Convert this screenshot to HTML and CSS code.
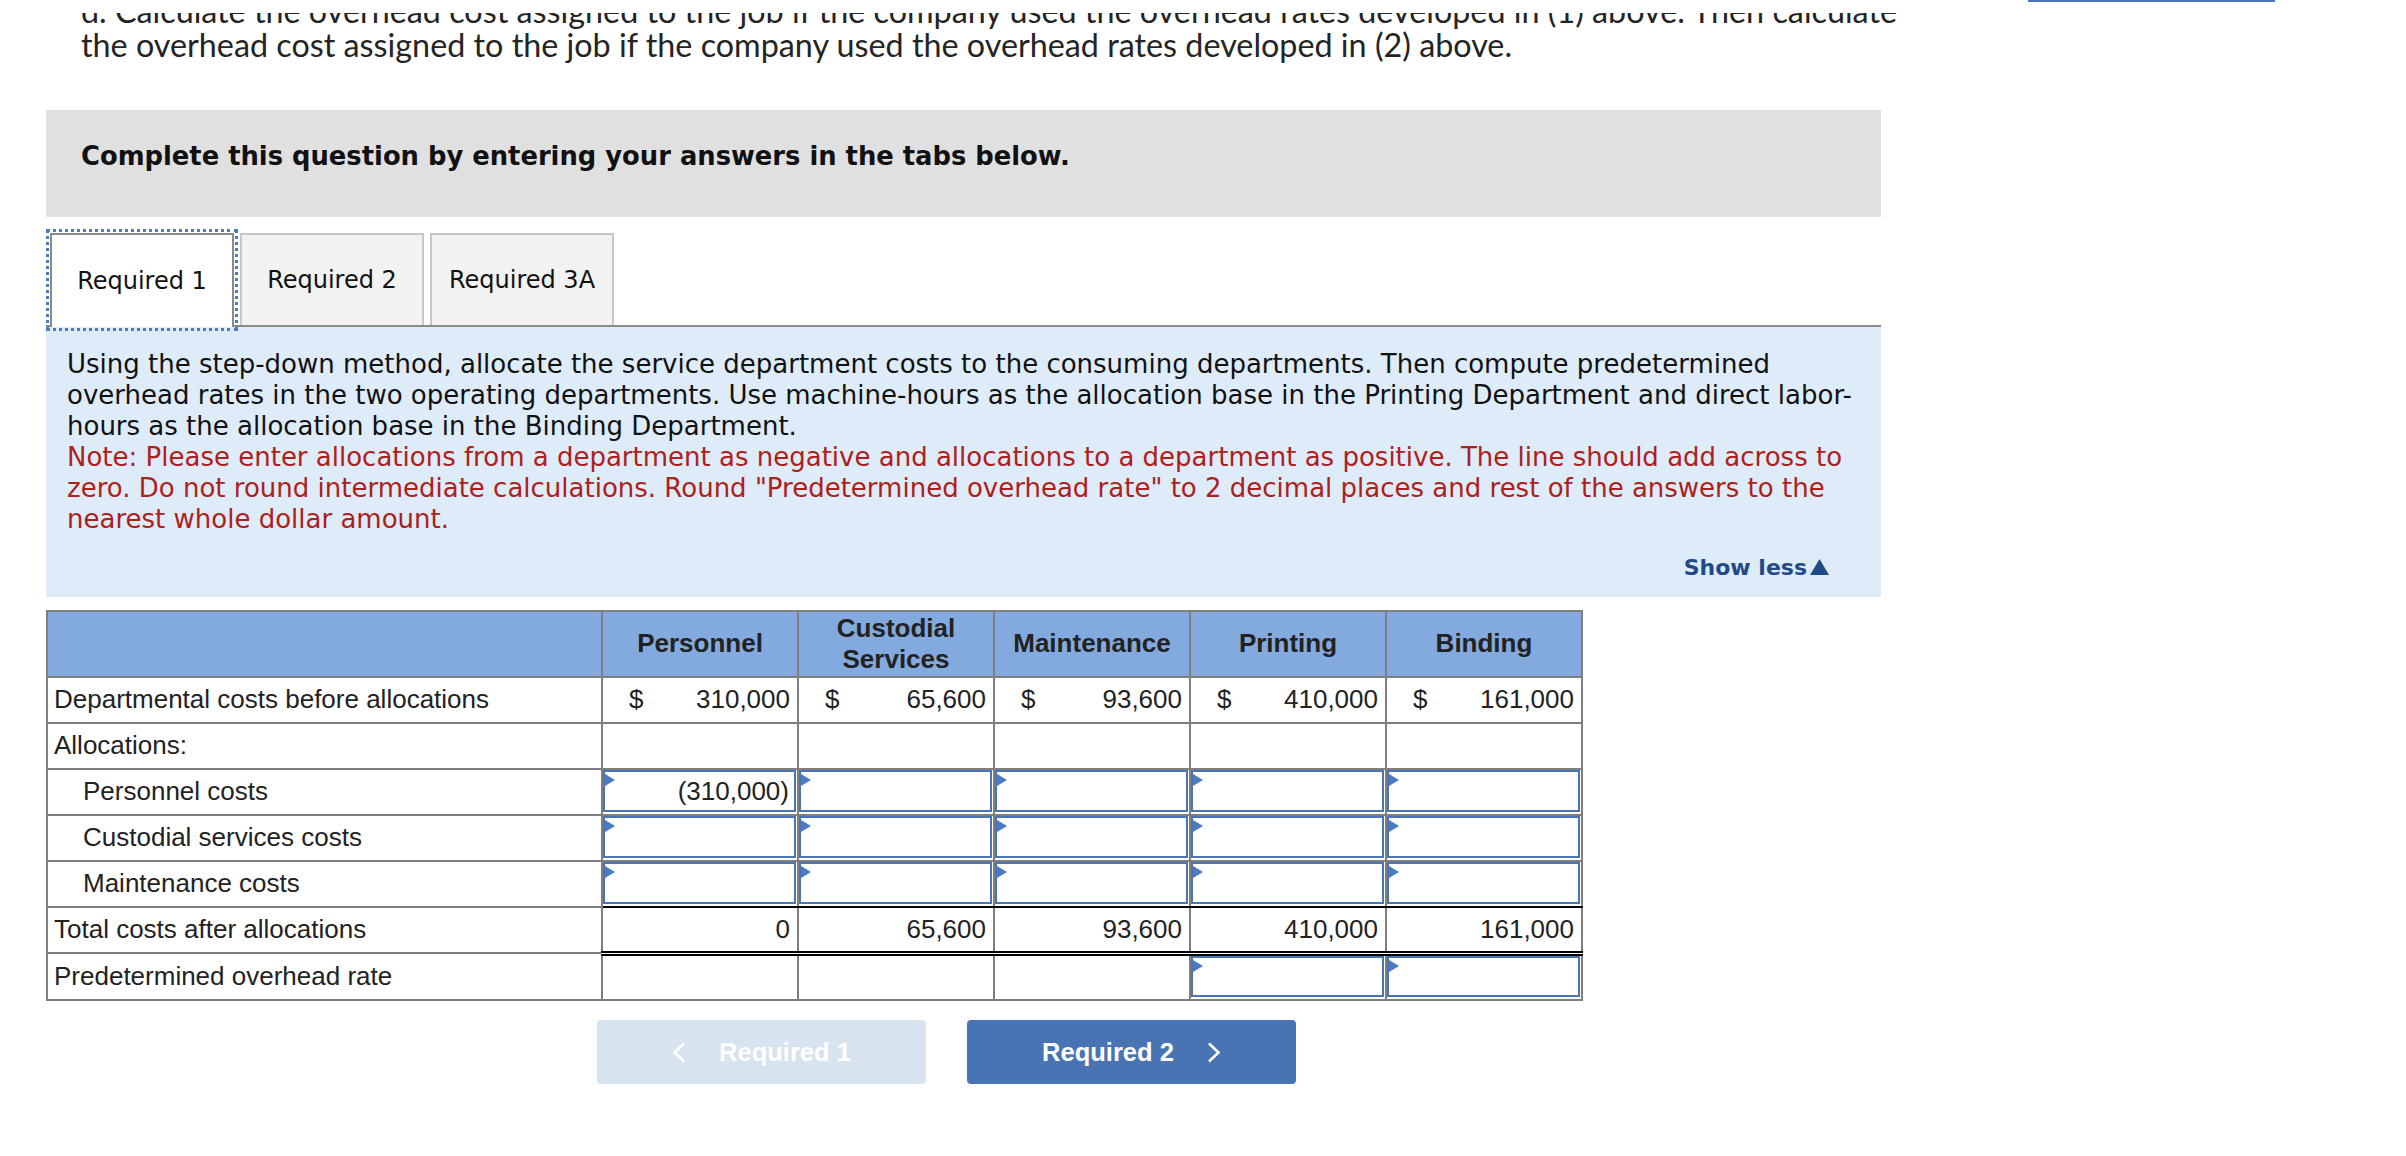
FILE: index.html
```html
<!DOCTYPE html>
<html lang="en">
<head>
<meta charset="utf-8">
<title>Step-down allocation</title>
<link rel="stylesheet" href="styles.css">
</head>
<body>
<div class="topbar"><div class="topbar-btn"></div></div>
<div class="page">
  <div class="main">
    <p class="question">d. Calculate the overhead cost assigned to the job if the company used the overhead rates developed in (1) above. Then calculate<br>the overhead cost assigned to the job if the company used the overhead rates developed in (2) above.</p>

    <div class="banner">Complete this question by entering your answers in the tabs below.</div>

    <div class="tabs">
      <div class="tab active">Required 1</div>
      <div class="tab">Required 2</div>
      <div class="tab">Required 3A</div>
    </div>

    <div class="panel">
      <p class="instr">Using the step-down method, allocate the service department costs to the consuming departments. Then compute predetermined<br>overhead rates in the two operating departments. Use machine-hours as the allocation base in the Printing Department and direct labor-<br>hours as the allocation base in the Binding Department.<br><span class="note">Note: Please enter allocations from a department as negative and allocations to a department as positive. The line should add across to<br>zero. Do not round intermediate calculations. Round "Predetermined overhead rate" to 2 decimal places and rest of the answers to the<br>nearest whole dollar amount.</span></p>
      <div class="showless">Show less<svg class="tri" width="21" height="18" viewBox="0 0 21 18"><polygon points="10.5,1 20,17 1,17" fill="#1f4a87"/></svg></div>
    </div>

    <table class="grid">
      <colgroup>
        <col class="c-label"><col class="c-num"><col class="c-num"><col class="c-num"><col class="c-num"><col class="c-num">
      </colgroup>
      <thead>
        <tr>
          <th></th>
          <th>Personnel</th>
          <th>Custodial<br>Services</th>
          <th>Maintenance</th>
          <th>Printing</th>
          <th>Binding</th>
        </tr>
      </thead>
      <tbody>
        <tr>
          <td class="label">Departmental costs before allocations</td>
          <td class="num"><span class="money"><span>$</span><span>310,000</span></span></td>
          <td class="num"><span class="money"><span>$</span><span>65,600</span></span></td>
          <td class="num"><span class="money"><span>$</span><span>93,600</span></span></td>
          <td class="num"><span class="money"><span>$</span><span>410,000</span></span></td>
          <td class="num"><span class="money"><span>$</span><span>161,000</span></span></td>
        </tr>
        <tr>
          <td class="label">Allocations:</td>
          <td class="num"></td><td class="num"></td><td class="num"></td><td class="num"></td><td class="num"></td>
        </tr>
        <tr>
          <td class="label indent">Personnel costs</td>
          <td class="in"><div class="inp">(310,000)</div></td>
          <td class="in"><div class="inp"></div></td>
          <td class="in"><div class="inp"></div></td>
          <td class="in"><div class="inp"></div></td>
          <td class="in"><div class="inp"></div></td>
        </tr>
        <tr>
          <td class="label indent">Custodial services costs</td>
          <td class="in"><div class="inp"></div></td>
          <td class="in"><div class="inp"></div></td>
          <td class="in"><div class="inp"></div></td>
          <td class="in"><div class="inp"></div></td>
          <td class="in"><div class="inp"></div></td>
        </tr>
        <tr class="pre-total">
          <td class="label indent">Maintenance costs</td>
          <td class="in"><div class="inp"></div></td>
          <td class="in"><div class="inp"></div></td>
          <td class="in"><div class="inp"></div></td>
          <td class="in"><div class="inp"></div></td>
          <td class="in"><div class="inp"></div></td>
        </tr>
        <tr class="total">
          <td class="label">Total costs after allocations</td>
          <td class="num">0</td>
          <td class="num">65,600</td>
          <td class="num">93,600</td>
          <td class="num">410,000</td>
          <td class="num">161,000</td>
        </tr>
        <tr class="last">
          <td class="label">Predetermined overhead rate</td>
          <td class="num"></td>
          <td class="num"></td>
          <td class="num"></td>
          <td class="in"><div class="inp"></div></td>
          <td class="in"><div class="inp"></div></td>
        </tr>
      </tbody>
    </table>

    <div class="nav">
      <div class="btn prev"><svg class="chev" width="14" height="21" viewBox="0 0 14 21"><polyline points="12,1.5 2.5,10.5 12,19.5" fill="none" stroke="#ffffff" stroke-width="2.6"/></svg><span>Required 1</span></div>
      <div class="btn next"><span>Required 2</span><svg class="chev" width="14" height="21" viewBox="0 0 14 21"><polyline points="2,1.5 11.5,10.5 2,19.5" fill="none" stroke="#ffffff" stroke-width="2.6"/></svg></div>
    </div>
  </div>
</div>
</body>
</html>
```

FILE: styles.css
```css
html, body {
  margin: 0;
  padding: 0;
  background: #ffffff;
}

/* header strip that the page has scrolled under */
.topbar {
  position: fixed;
  top: 0;
  left: 0;
  right: 0;
  height: 13px;
  background: #ffffff;
  z-index: 5;
}

.topbar-btn {
  position: absolute;
  top: 0;
  left: 2028px;
  width: 247px;
  height: 2px;
  background: #4a76b8;
}

.page {
  overflow: hidden;
  height: 1156px;
}

.main {
  margin-left: 46px;
  width: 1835px;
}

.question {
  margin: -6.5px 0 0 0;
  padding-left: 35px;
  font-family: Lato, "Liberation Sans", sans-serif;
  font-size: 32.3px;
  line-height: 34px;
  color: #242424;
  white-space: nowrap;
}

.banner {
  margin-top: 48px;
  box-sizing: border-box;
  height: 107px;
  background: #e0e0e0;
  display: flex;
  align-items: center;
  padding: 0 0 14px 35px;
  font-family: "DejaVu Sans", Verdana, sans-serif;
  font-weight: bold;
  font-size: 25.8px;
  color: #111111;
}

.tabs {
  margin-top: 16px;
  display: flex;
  align-items: flex-start;
  gap: 6px;
  padding-left: 4px;
  border-bottom: 2px solid #8a8a8a;
}

.tab {
  box-sizing: border-box;
  width: 184px;
  height: 92px;
  display: flex;
  align-items: center;
  justify-content: center;
  background: #f2f2f2;
  border: 2px solid #c6c6c6;
  border-bottom: none;
  font-family: "DejaVu Sans", Verdana, sans-serif;
  font-size: 24px;
  color: #111111;
}

.tab.active {
  height: 94px;
  margin-bottom: -2px;
  background: #ffffff;
  border-color: #8a8a8a;
  outline: 3px dotted #4a7cc0;
  outline-offset: 1px;
}

.panel {
  background: #deebf8;
  padding: 22px 51px 14px 21px;
  font-family: "DejaVu Sans", Verdana, sans-serif;
  font-size: 26px;
  line-height: 31px;
  color: #111111;
}

.instr {
  margin: 0;
  white-space: nowrap;
}

.note {
  color: #ad201c;
}

.showless {
  margin-top: 17px;
  display: flex;
  justify-content: flex-end;
  align-items: center;
  gap: 2px;
  font-weight: bold;
  font-size: 22px;
  color: #1f4a87;
}

.tri {
  display: block;
}

.grid {
  margin-top: 13px;
  border-collapse: collapse;
  table-layout: fixed;
  width: 1535px;
  font-family: "Liberation Sans", Arial, sans-serif;
  font-size: 26px;
  color: #222222;
}

.c-label { width: 555px; }
.c-num { width: 196px; }

.grid th,
.grid td {
  border: 2px solid #7f7f7f;
  padding: 0 7px;
  height: 44px;
}

.grid th {
  height: 64px;
  background: #83aade;
  font-weight: bold;
  line-height: 31px;
  text-align: center;
}

.grid td.label {
  padding-left: 6px;
}

.grid td.indent {
  padding-left: 35px;
}

.grid td.num {
  text-align: right;
}

.money {
  display: flex;
  justify-content: space-between;
  padding-left: 19px;
}

.grid td.in {
  padding: 0 1px 0 0;
}

.inp {
  position: relative;
  box-sizing: border-box;
  height: 42px;
  margin-bottom: 1px;
  border: 2px solid #4a74b6;
  text-align: right;
  padding-right: 5px;
  line-height: 38px;
}

.inp::before {
  content: "";
  position: absolute;
  left: 0;
  top: 2px;
  border-left: 10px solid #4b7bc4;
  border-top: 6px solid transparent;
  border-bottom: 6px solid transparent;
}

.pre-total td.in {
  border-bottom-color: #000000;
}

.total td {
  height: 43px;
}

.total td.num {
  border-top-color: #000000;
  border-bottom: 5px double #000000;
}

.last td {
  height: 43px;
}

.last .inp {
  height: 41px;
}

.nav {
  margin: 19.5px 0 0 551px;
  display: flex;
  gap: 41px;
}

.btn {
  box-sizing: border-box;
  width: 329px;
  height: 64px;
  border-radius: 4px;
  display: flex;
  align-items: center;
  justify-content: center;
  gap: 33px;
  font-family: "Liberation Sans", Arial, sans-serif;
  font-weight: bold;
  font-size: 25.5px;
  color: #ffffff;
}

.btn.prev {
  background: #d8e3f0;
}

.btn.next {
  background: #4874b3;
}

.chev {
  display: block;
}
```
